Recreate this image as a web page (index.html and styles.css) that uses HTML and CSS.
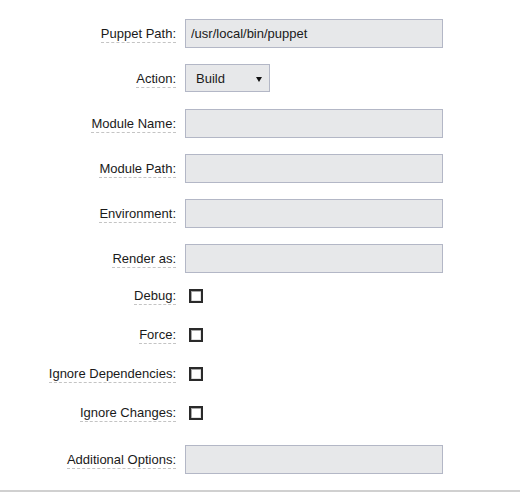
FILE: index.html
```html
<!DOCTYPE html>
<html>
<head>
<meta charset="utf-8">
<link rel="stylesheet" href="styles.css">
</head>
<body>
<form class="form">
  <div class="row">
    <label class="lbl"><span>Puppet Path:</span></label>
    <input class="field" type="text" value="/usr/local/bin/puppet">
  </div>
  <div class="row">
    <label class="lbl"><span>Action:</span></label>
    <div class="select"><span class="select-text">Build</span><span class="arrow"></span></div>
  </div>
  <div class="row">
    <label class="lbl"><span>Module Name:</span></label>
    <input class="field" type="text">
  </div>
  <div class="row">
    <label class="lbl"><span>Module Path:</span></label>
    <input class="field" type="text">
  </div>
  <div class="row">
    <label class="lbl"><span>Environment:</span></label>
    <input class="field" type="text">
  </div>
  <div class="row">
    <label class="lbl"><span>Render as:</span></label>
    <input class="field" type="text">
  </div>
  <div class="row check">
    <label class="lbl"><span>Debug:</span></label>
    <span class="box"></span>
  </div>
  <div class="row check">
    <label class="lbl"><span>Force:</span></label>
    <span class="box"></span>
  </div>
  <div class="row check">
    <label class="lbl"><span>Ignore Dependencies:</span></label>
    <span class="box"></span>
  </div>
  <div class="row check">
    <label class="lbl"><span>Ignore Changes:</span></label>
    <span class="box"></span>
  </div>
  <div class="row">
    <label class="lbl"><span>Additional Options:</span></label>
    <input class="field" type="text">
  </div>
</form>
<div class="rule"></div>
</body>
</html>
```
FILE: styles.css
```css
html, body {
  margin: 0;
  padding: 0;
  background: #ffffff;
}
body {
  font-family: "Liberation Sans", Arial, sans-serif;
  font-size: 13px;
  color: #1a1a1a;
  width: 524px;
  height: 494px;
  overflow: hidden;
}
.form {
  padding-top: 19px;
  height: 471px;
  box-sizing: border-box;
}
.row {
  display: flex;
  align-items: center;
  height: 28px;
  margin-bottom: 17px;
}
.row.check {
  height: 13px;
  margin-bottom: 26px;
}
.lbl {
  width: 176px;
  flex: none;
  text-align: right;
  margin-right: 9px;
  line-height: 15px;
}
.lbl span {
  display: inline-block;
  border-bottom: 1px dashed #c4c4c4;
  padding-bottom: 1px;
  margin-top: 2px;
}
.field {
  box-sizing: border-box;
  width: 258px;
  height: 29px;
  margin: 0;
  padding: 0 5px;
  border: 1px solid #b3b7c6;
  background: #e7e8ea;
  font-family: "Liberation Sans", Arial, sans-serif;
  font-size: 13px;
  color: #1a1a1a;
  outline: none;
}
.select {
  box-sizing: border-box;
  width: 85px;
  height: 28px;
  border: 1px solid #b3b7c6;
  background: #e7e8ea;
  display: flex;
  align-items: center;
  justify-content: space-between;
  padding: 0 7px 0 10px;
}
.arrow {
  width: 0;
  height: 0;
  border-left: 3px solid transparent;
  border-right: 3px solid transparent;
  border-top: 5px solid #111;
  margin-top: 2px;
}
.box {
  box-sizing: border-box;
  width: 14px;
  height: 14px;
  margin-left: 4px;
  border: 2px solid #2a2a2a;
  background: #ffffff;
  box-shadow: inset 1px 1px 0 #a8a8a8, inset -1px -1px 0 #e2e2e2;
}
.rule {
  height: 0;
  border-top: 2px solid #d0d0d0;
  margin-top: 19px;
  width: 520px;
}
```
